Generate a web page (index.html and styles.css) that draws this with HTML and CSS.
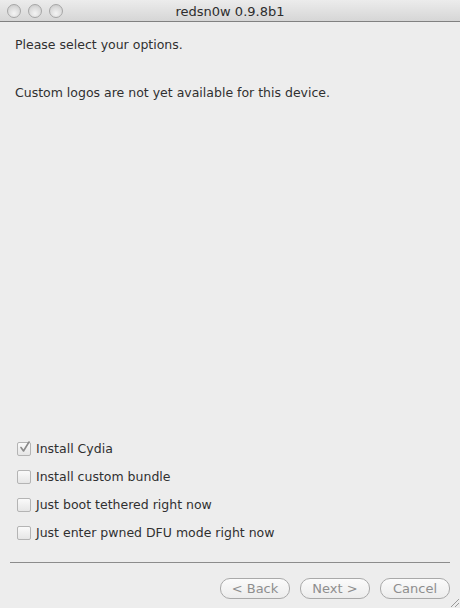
FILE: index.html
```html
<!DOCTYPE html>
<html>
<head>
<meta charset="utf-8">
<link rel="stylesheet" href="styles.css">
</head>
<body>
<div class="window">
  <div class="titlebar">
    <div class="lights">
      <span class="light"></span><span class="light"></span><span class="light"></span>
    </div>
    <div class="title">redsn0w 0.9.8b1</div>
  </div>
  <div class="content">
    <p class="line first">Please select your options.</p>
    <p class="line second">Custom logos are not yet available for this device.</p>
    <div class="spacer"></div>
    <div class="options">
      <label class="opt"><span class="box checked"><svg width="13" height="13" viewBox="0 0 13 13"><path d="M3 6.5 L5.5 10 L11 1" fill="none" stroke="#8a8a8a" stroke-width="1.6" stroke-linecap="round" stroke-linejoin="round"/></svg></span>Install Cydia</label>
      <label class="opt"><span class="box"></span>Install custom bundle</label>
      <label class="opt"><span class="box"></span>Just boot tethered right now</label>
      <label class="opt"><span class="box"></span>Just enter pwned DFU mode right now</label>
    </div>
    <div class="sep"></div>
    <div class="buttons">
      <span class="btn">&lt; Back</span>
      <span class="btn">Next &gt;</span>
      <span class="btn">Cancel</span>
    </div>
  </div>
  <svg class="grip" width="12" height="12" viewBox="0 0 12 12">
    <path d="M11 3 L3 11 M11 7 L7 11 M11 11 L11 11" stroke="#9a9a9a" stroke-width="1" fill="none"/>
  </svg>
</div>
</body>
</html>
```
FILE: styles.css
```css
html, body {
  margin: 0;
  padding: 0;
}
body {
  width: 460px;
  height: 608px;
  overflow: hidden;
  font-family: "DejaVu Sans", "Liberation Sans", sans-serif;
  font-size: 12.5px;
  color: #303030;
  background: #ededed;
}
.window {
  position: relative;
  width: 460px;
  height: 608px;
  display: flex;
  flex-direction: column;
  background: #ededed;
}
.titlebar {
  position: relative;
  height: 21px;
  flex: none;
  background: linear-gradient(#ececec, #d6d6d6);
  border-bottom: 1px solid #818181;
  display: flex;
  align-items: center;
  justify-content: center;
}
.lights {
  position: absolute;
  left: 7px;
  top: 4px;
  display: flex;
  gap: 7px;
}
.light {
  width: 12px;
  height: 12px;
  border-radius: 50%;
  border: 1px solid #a6a6a6;
  background: radial-gradient(circle at 50% 70%, #f4f4f4 0%, #dcdcdc 55%, #c4c4c4 100%);
  box-sizing: content-box;
}
.title {
  font-size: 13px;
  color: #2d2d2d;
  padding-top: 1px;
}
.content {
  flex: 1;
  display: flex;
  flex-direction: column;
  padding: 0 10px 0 10px;
}
.line {
  margin: 0;
  padding-left: 5px;
  height: 16px;
  line-height: 16px;
}
.first { margin-top: 15px; }
.second { margin-top: 32px; }
.spacer { flex: 1; }
.options {
  display: flex;
  flex-direction: column;
  gap: 12px;
  padding-left: 7px;
  margin-bottom: 21px;
}
.opt {
  display: flex;
  align-items: center;
  height: 16px;
  line-height: 16px;
}
.box {
  width: 12px;
  height: 12px;
  border: 1px solid #b4b4b4;
  border-radius: 2px;
  background: linear-gradient(#fafafa, #e6e6e6);
  margin-right: 5px;
  position: relative;
  flex: none;
}
.box svg {
  position: absolute;
  left: 0;
  top: -2px;
}
.sep {
  height: 1px;
  background: #8c8c8c;
  flex: none;
}
.buttons {
  display: flex;
  justify-content: flex-end;
  gap: 10px;
  padding-top: 15px;
  height: 30px;
  box-sizing: content-box;
}
.btn {
  width: 68px;
  height: 19px;
  border: 1px solid #a9a9a9;
  border-radius: 10px;
  background: linear-gradient(#fbfbfb, #ececec);
  color: #8e8e8e;
  font-size: 13px;
  display: flex;
  align-items: center;
  justify-content: center;
  box-sizing: content-box;
}
.grip {
  position: absolute;
  right: 0;
  bottom: 0;
}
```
